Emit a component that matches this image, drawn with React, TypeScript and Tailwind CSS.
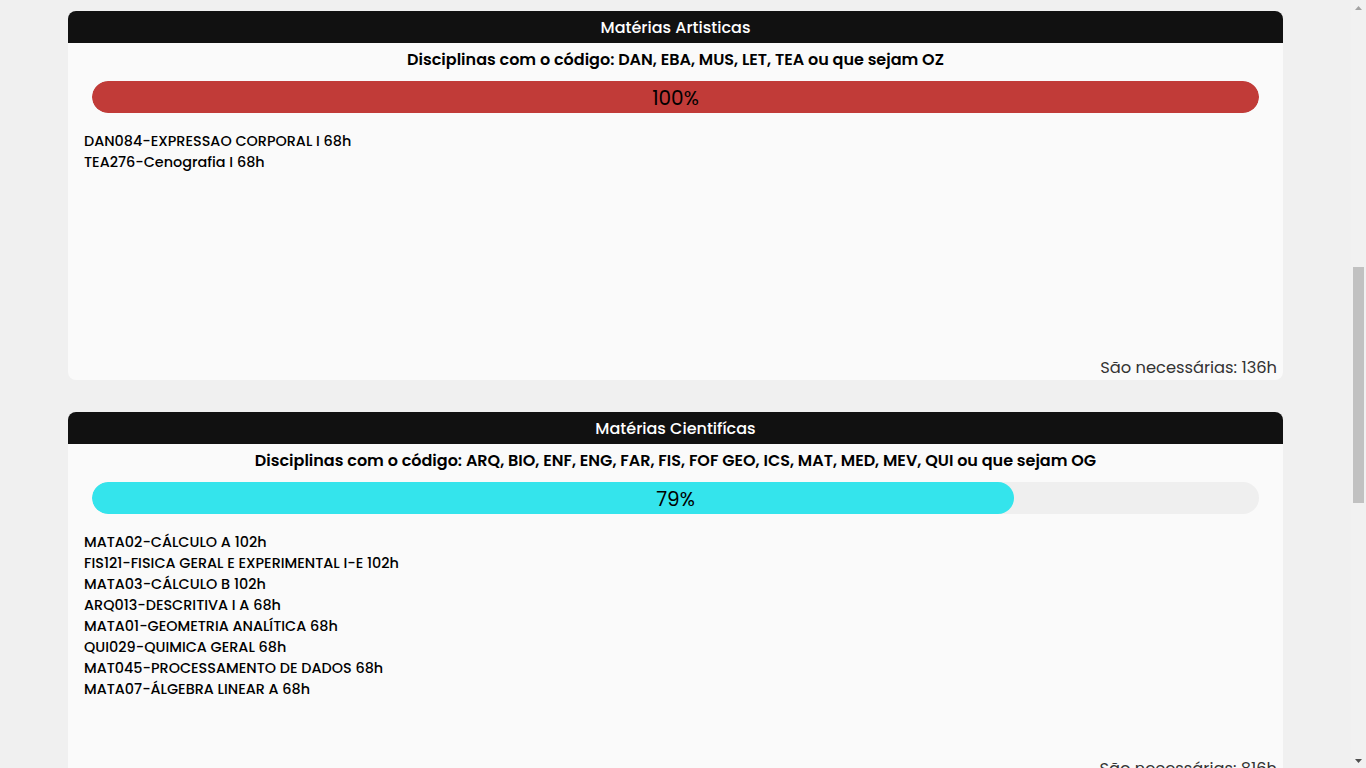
import React, { useEffect } from 'react';

interface Materia {
  codigo: string;
  nome: string;
  horas: number;
}

interface Grupo {
  titulo: string;
  descricao: string;
  cor: string;
  progresso: number;
  necessarias: number;
  materias: Materia[];
}

const grupos: Grupo[] = [
  {
    titulo: 'Matérias Obrigatórias',
    descricao: 'Disciplinas obrigatórias do curso',
    cor: 'bg-[#4caf50]',
    progresso: 64,
    necessarias: 1904,
    materias: [
      { codigo: 'ARQ001', nome: 'INTRODUÇÃO À ARQUITETURA', horas: 68 },
      { codigo: 'ARQ002', nome: 'DESENHO I', horas: 102 },
    ],
  },
  {
    titulo: 'Matérias Optativas',
    descricao: 'Disciplinas optativas do curso',
    cor: 'bg-[#ff9800]',
    progresso: 50,
    necessarias: 272,
    materias: [{ codigo: 'ARQ150', nome: 'TÓPICOS ESPECIAIS', horas: 68 }],
  },
  {
    titulo: 'Matérias Artisticas',
    descricao: 'Disciplinas com o código: DAN, EBA, MUS, LET, TEA ou que sejam OZ',
    cor: 'bg-[#c13b38]',
    progresso: 100,
    necessarias: 136,
    materias: [
      { codigo: 'DAN084', nome: 'EXPRESSAO CORPORAL I', horas: 68 },
      { codigo: 'TEA276', nome: 'Cenografia I', horas: 68 },
    ],
  },
  {
    titulo: 'Matérias Cientifícas',
    descricao:
      'Disciplinas com o código: ARQ, BIO, ENF, ENG, FAR, FIS, FOF GEO, ICS, MAT, MED, MEV, QUI ou que sejam OG',
    cor: 'bg-[#34e4ec]',
    progresso: 79,
    necessarias: 816,
    materias: [
      { codigo: 'MATA02', nome: 'CÁLCULO A', horas: 102 },
      { codigo: 'FIS121', nome: 'FISICA GERAL E EXPERIMENTAL I-E', horas: 102 },
      { codigo: 'MATA03', nome: 'CÁLCULO B', horas: 102 },
      { codigo: 'ARQ013', nome: 'DESCRITIVA I A', horas: 68 },
      { codigo: 'MATA01', nome: 'GEOMETRIA ANALÍTICA', horas: 68 },
      { codigo: 'QUI029', nome: 'QUIMICA GERAL', horas: 68 },
      { codigo: 'MAT045', nome: 'PROCESSAMENTO DE DADOS', horas: 68 },
      { codigo: 'MATA07', nome: 'ÁLGEBRA LINEAR A', horas: 68 },
    ],
  },
  {
    titulo: 'Matérias Humanas',
    descricao: 'Disciplinas com o código: ADM, DIR, ECO, FCH, HIS ou que sejam OH',
    cor: 'bg-[#9c27b0]',
    progresso: 25,
    necessarias: 272,
    materias: [{ codigo: 'FCH001', nome: 'FILOSOFIA I', horas: 68 }],
  },
  {
    titulo: 'Atividades Complementares',
    descricao: 'Atividades de extensão e complementares',
    cor: 'bg-[#2196f3]',
    progresso: 40,
    necessarias: 170,
    materias: [],
  },
];

const Card: React.FC<{ grupo: Grupo }> = ({ grupo }) => (
  <div className="rounded-lg bg-[#fafafa] overflow-hidden">
    <div className="h-8 bg-[#111111] flex items-center justify-center pt-[2px] text-white text-base font-medium">
      {grupo.titulo}
    </div>
    <div className="pt-[5px] px-6 text-center text-base font-semibold text-black leading-6">
      {grupo.descricao}
    </div>
    <div className="mx-6 mt-[9px] h-8 rounded-full bg-[#efefef] relative overflow-hidden">
      <div className={`h-full rounded-full ${grupo.cor}`} style={{ width: `${grupo.progresso}%` }} />
      <div className="absolute inset-0 flex items-center justify-center pt-[2px] text-xl text-black">
        {grupo.progresso}%
      </div>
    </div>
    <div className="px-4 mt-[18px] h-[225px] text-[14.4px] font-medium text-black leading-[21px]">
      {grupo.materias.map((m) => (
        <div key={m.codigo}>
          {m.codigo}-{m.nome} {m.horas}h
        </div>
      ))}
    </div>
    <div className="pr-[6px] text-right text-[16.3px] text-[#333333] leading-6">
      São necessárias: {grupo.necessarias}h
    </div>
  </div>
);

// headless browser hides real scrollbars, so draw the one from the screenshot
const FakeScrollbar = () => (
  <div className="fixed top-0 right-0 w-[15px] h-screen bg-[#f1f1f1] flex flex-col items-center">
    <div className="h-[15px] flex items-center justify-center text-[#a3a3a3]">
      <svg width="7" height="4" viewBox="0 0 7 4">
        <path d="M0 4 L3.5 0 L7 4 Z" fill="currentColor" />
      </svg>
    </div>
    <div className="flex-1 w-full relative">
      <div className="absolute left-[2px] right-[2px] top-[252px] h-[236px] bg-[#c1c1c1]" />
    </div>
    <div className="h-[15px] flex items-center justify-center text-[#505050]">
      <svg width="7" height="4" viewBox="0 0 7 4">
        <path d="M0 0 L7 0 L3.5 4 Z" fill="currentColor" />
      </svg>
    </div>
  </div>
);

export default function App() {
  useEffect(() => {
    window.scrollTo(0, 820);
  }, []);

  return (
    <div
      className="min-h-screen bg-[#f0f0f0] pt-[29px] pb-8 pr-[15px]"
      style={{ fontFamily: '"Poppins", "Open Sans", sans-serif' }}
    >
      <div className="mx-[68px] flex flex-col gap-8">
        {grupos.map((g) => (
          <Card key={g.titulo} grupo={g} />
        ))}
      </div>
      <FakeScrollbar />
    </div>
  );
}
